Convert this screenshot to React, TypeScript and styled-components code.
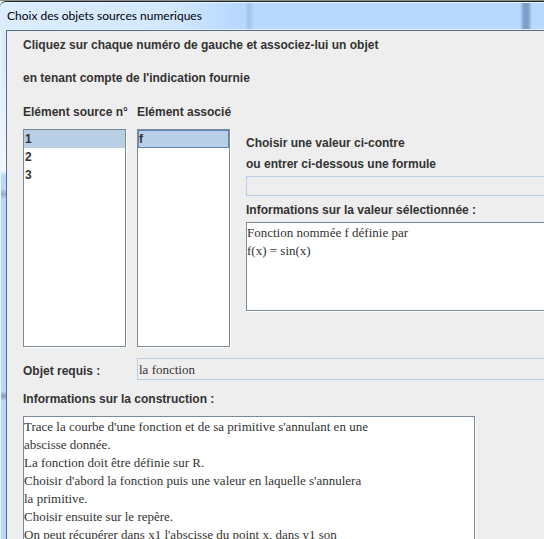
import React, { useState } from "react";
import styled, { createGlobalStyle, css } from "styled-components";

const color = {
  glass: "#b8d9fd",
  panel: "#eeeeee",
  text: "#333333",
  edge: "#7a8a99",
  soft: "#b8cfe5",
  focus: "#6382bf",
};

const GlobalStyle = createGlobalStyle`
  * { box-sizing: border-box; }
  body { margin: 0; background: ${color.glass}; }
`;

const Dialog = styled.main`
  height: 100vh;
  overflow: hidden;
  display: flex;
  flex-direction: column;
  border-top: 1px solid #8c8f8a;
  background:
    linear-gradient(90deg, #eaf5ff 1px, transparent 1px),
    linear-gradient(180deg, transparent 188px, #8eabcd 193px, transparent 198px, transparent 390px, #7f9dc4 395px, transparent 400px),
    linear-gradient(180deg, #d9ebff 0, #d9ebff 60px, #f2f8ff 170px, ${color.glass} 174px);
`;

const TitleBar = styled.header`
  flex: none;
  height: 29px;
  padding: 4px 0 0 7px;
  border-top: 1px solid #1c232b;
  box-shadow: inset 0 1px #e9f5ff, inset 0 -1px #dceeff;
  border-top-left-radius: 6px;
  background:
    linear-gradient(90deg, transparent calc(100% - 24px), #7e9cc8 calc(100% - 20px), #7e9cc8 calc(100% - 16px), transparent calc(100% - 12px)),
    linear-gradient(90deg, transparent 245px, #a6c6e9 248px, #a6c6e9 250px, transparent 254px),
    linear-gradient(90deg, #dcedff 0, #d3e8ff 170px, ${color.glass} 235px);
`;

const Title = styled.h1`
  margin: 0;
  font: 400 12px/20px Lato, "Open Sans", sans-serif;
  color: #000;
  white-space: nowrap;
`;

const Panel = styled.form`
  flex: 1 0 auto;
  display: flex;
  flex-direction: column;
  margin-left: 6px;
  padding: 5px 0 0 16px;
  border: solid #5b6d80;
  border-width: 1px 0 0 1px;
  background: ${color.panel};
`;

const labelText = css`
  margin: 0;
  font: 700 12px/18px "Liberation Sans", Arial, sans-serif;
  color: ${color.text};
  white-space: nowrap;
`;

const Hint = styled.p`
  ${labelText}
`;

const Label = styled.label`
  ${labelText}
`;

const Instructions = styled.div`
  display: flex;
  flex-direction: column;
  gap: 15px;
  margin-bottom: 16px;
`;

const Chooser = styled.div`
  display: grid;
  grid-template-columns: 103px 93px 1fr;
  grid-template-rows: 18px 218px;
  gap: 8px 11px;
`;

const Details = styled.div`
  grid-column: 3;
  grid-row: 2;
  display: flex;
  flex-direction: column;
  gap: 3px;
  padding: 5px 0 0 5px;
`;

const framed = css`
  border: 1px solid ${color.edge};
  box-shadow: 1px 1px #fff;
  border-radius: 0;
  outline: 0;
  background: #fff;
`;

const List = styled.select<{ $outlined?: boolean }>`
  ${framed}
  grid-row: 2;
  appearance: none;
  width: 100%;
  height: 100%;
  padding: 0;
  overflow: hidden;

  option {
    height: 18px;
    padding: 1px 1px 0;
    border: 1px solid transparent;
    border-left-width: 0;
    font: 700 12px/16px "Liberation Sans", Arial, sans-serif;
    color: ${color.text};
  }

  option:checked {
    background: linear-gradient(${color.soft}, ${color.soft});
    border-color: ${(p) => (p.$outlined ? color.focus : color.soft)};
    border-left-width: ${(p) => (p.$outlined ? "1px" : "0")};
    padding-left: ${(p) => (p.$outlined ? "0" : "1px")};
    color: ${color.text};
  }
`;

const entryText = css`
  font: 400 13px/18px "Liberation Serif", "Times New Roman", serif;
  color: ${color.text};
`;

const Field = styled.input`
  ${entryText}
  min-width: 0;
  height: 22px;
  padding: 2px 1px 0;
  border: 1px solid ${color.soft};
  border-right: 0;
  border-radius: 0;
  outline: 0;
  background: ${color.panel};
`;

const FormulaField = styled(Field)`
  height: 20px;
  margin-bottom: 2px;
`;

const Notes = styled.textarea`
  ${framed}
  ${entryText}
  display: block;
  padding: 1px 0;
  resize: none;
  overflow: hidden;
`;

const ValueNotes = styled(Notes)`
  height: 89px;
  border-right: 0;
`;

const BuildNotes = styled(Notes)`
  width: 452px;
  max-width: calc(100% - 16px);
  margin-top: 8px;
  white-space: pre;
`;

const RequiredRow = styled.div`
  display: grid;
  grid-template-columns: 103px 1fr;
  column-gap: 11px;
  align-items: end;
  margin: 11px 0 10px;
`;

const sources = ["1", "2", "3"];

const construction = [
  "Trace la courbe d'une fonction et de sa primitive s'annulant en une",
  "abscisse donnée.",
  "La fonction doit être définie sur R.",
  "Choisir d'abord la fonction puis une valeur en laquelle s'annulera",
  "la primitive.",
  "Choisir ensuite sur le repère.",
  "On peut récupérer dans x1 l'abscisse du point x, dans y1 son",
].join("\n");

export default function App() {
  const [source, setSource] = useState("1");
  const [formula, setFormula] = useState("");

  return (
    <>
      <GlobalStyle />
      <Dialog>
        <TitleBar>
          <Title>Choix des objets sources numeriques</Title>
        </TitleBar>
        <Panel onSubmit={(e) => e.preventDefault()}>
          <Instructions>
            <Hint>Cliquez sur chaque numéro de gauche et associez-lui un objet</Hint>
            <Hint>en tenant compte de l'indication fournie</Hint>
          </Instructions>
          <Chooser>
            <Label htmlFor="source">Elément source n°</Label>
            <Label htmlFor="linked">Elément associé</Label>
            <List id="source" size={12} value={source} onChange={(e) => setSource(e.target.value)}>
              {sources.map((s) => (
                <option key={s}>{s}</option>
              ))}
            </List>
            <List id="linked" size={12} defaultValue="f" $outlined>
              <option>f</option>
            </List>
            <Details>
              <Hint>Choisir une valeur ci-contre</Hint>
              <Label htmlFor="formula">ou entrer ci-dessous une formule</Label>
              <FormulaField id="formula" value={formula} onChange={(e) => setFormula(e.target.value)} />
              <Label htmlFor="value-notes">Informations sur la valeur sélectionnée :</Label>
              <ValueNotes id="value-notes" readOnly value={"Fonction nommée f définie par\nf(x) = sin(x)"} />
            </Details>
          </Chooser>
          <RequiredRow>
            <Label htmlFor="required">Objet requis :</Label>
            <Field id="required" readOnly value="la fonction" />
          </RequiredRow>
          <Label htmlFor="build-notes">Informations sur la construction :</Label>
          <BuildNotes id="build-notes" rows={10} readOnly value={construction} />
        </Panel>
      </Dialog>
    </>
  );
}
